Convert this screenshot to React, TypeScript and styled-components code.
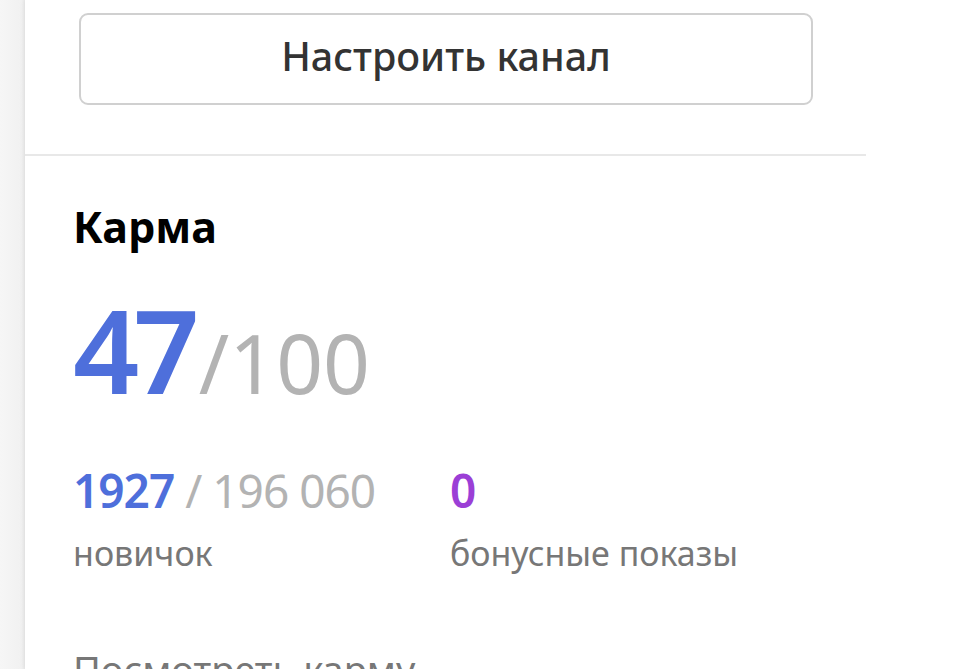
import styled, { createGlobalStyle } from 'styled-components';

const GlobalStyle = createGlobalStyle`
    html, body {
        margin: 0;
        padding: 0;
        background: #f4f4f4;
        font-family: "Noto Sans", "Open Sans", Arial, sans-serif;
    }
`;

const Page = styled.div`
    display: flex;
    height: 669px;
    overflow: hidden;
    background: linear-gradient(to right, #f6f6f6 0, #f1f1f1 22px, #e9e9e9 25px);
`;

const Panel = styled.main`
    flex: 1;
    margin-left: 25px;
    background: #fff;
    box-shadow: -2px 0 4px rgba(0, 0, 0, 0.04);
`;

const ButtonSection = styled.div`
    padding: 13px 0 49px 54px;
`;

const SettingsButton = styled.button`
    display: flex;
    align-items: center;
    justify-content: center;
    width: 734px;
    height: 92px;
    padding: 0 0 6px;
    border: 2px solid #d0d0d0;
    border-radius: 9px;
    background: #fff;
    color: #333;
    font-family: inherit;
    font-size: 39.5px;
    font-weight: 500;
    cursor: pointer;
`;

const Divider = styled.hr`
    width: 841px;
    height: 2px;
    margin: 0;
    border: 0;
    background: #e8e8e8;
`;

const KarmaSection = styled.section`
    padding: 45px 0 0 48px;
`;

const Title = styled.h2`
    margin: 0;
    font-size: 43px;
    font-weight: 700;
    line-height: 52px;
    color: #000;
`;

const Score = styled.div`
    display: flex;
    align-items: baseline;
    margin-top: 36px;
    line-height: 120px;
`;

const ScoreValue = styled.span`
    font-size: 116px;
    font-weight: 600;
    letter-spacing: -6px;
    color: #4e6fdb;
`;

const ScoreMax = styled.span`
    margin-left: 5px;
    font-size: 82px;
    font-weight: 400;
    letter-spacing: 0;
    color: #b3b3b3;
`;

const Stats = styled.div`
    display: grid;
    grid-template-columns: 377px auto;
    margin-top: 40px;
`;

const Stat = styled.div`
    display: flex;
    flex-direction: column;
`;

const StatValue = styled.div<{ color: string }>`
    font-size: 46px;
    font-weight: 600;
    line-height: 56px;
    letter-spacing: -1px;
    color: ${props => props.color};
`;

const StatTotal = styled.span`
    font-weight: 400;
    color: #b3b3b3;
`;

const StatLabel = styled.div`
    margin-top: 13px;
    font-size: 34px;
    line-height: 44px;
    color: #777;
`;

const KarmaLink = styled.a`
    display: block;
    margin-top: 70px;
    font-size: 38px;
    line-height: 48px;
    color: #777;
    text-decoration: none;
`;

const App = () => {
    return (
        <>
            <GlobalStyle />
            <Page>
                <Panel>
                    <ButtonSection>
                        <SettingsButton>Настроить канал</SettingsButton>
                    </ButtonSection>
                    <Divider />
                    <KarmaSection>
                        <Title>Карма</Title>
                        <Score>
                            <ScoreValue>47</ScoreValue>
                            <ScoreMax>/100</ScoreMax>
                        </Score>
                        <Stats>
                            <Stat>
                                <StatValue color="#4e6fdb">
                                    1927 <StatTotal>/ 196 060</StatTotal>
                                </StatValue>
                                <StatLabel>новичок</StatLabel>
                            </Stat>
                            <Stat>
                                <StatValue color="#9b3fd6">0</StatValue>
                                <StatLabel>бонусные показы</StatLabel>
                            </Stat>
                        </Stats>
                        <KarmaLink href="#">Посмотреть карму</KarmaLink>
                    </KarmaSection>
                </Panel>
            </Page>
        </>
    );
};

export default App;
